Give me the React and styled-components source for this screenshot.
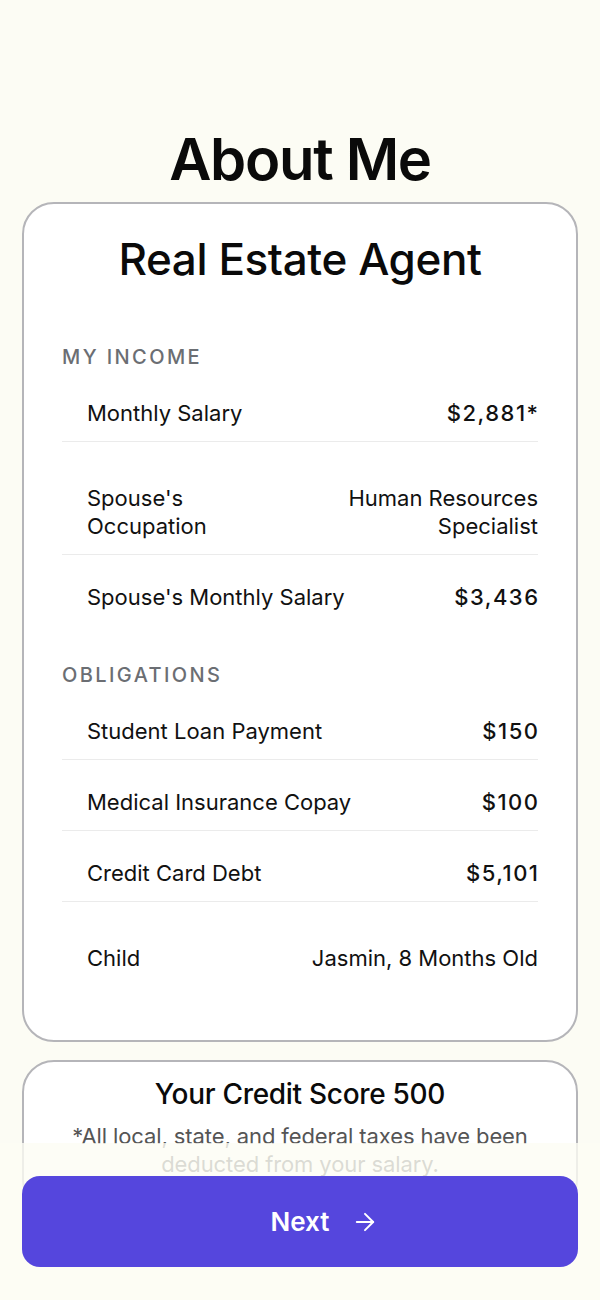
import React from "react";
import styled, { createGlobalStyle } from "styled-components";
import { ArrowRight } from "lucide-react";

const GlobalStyle = createGlobalStyle`
  * { box-sizing: border-box; }
  html, body { margin: 0; padding: 0; background: #fcfcf4; }
  body {
    font-family: Inter, "Noto Sans", "Liberation Sans", sans-serif;
    color: #111111;
    -webkit-font-smoothing: antialiased;
  }
`;

const Page = styled.main`
  display: flex;
  flex-direction: column;
  padding: 125px 22px 0;
`;

const Title = styled.h1`
  margin: 0 0 9px;
  text-align: center;
  font-size: 58px;
  line-height: 68px;
  font-weight: 600;
  letter-spacing: -1.3px;
  color: #0a0a0a;
`;

const Card = styled.section`
  background: #ffffff;
  border: 2px solid #b5b5b9;
  border-radius: 32px;
  padding: ${(p) => p.$pad};
  display: flex;
  flex-direction: column;
  & + & {
    margin-top: 18px;
  }
`;

const JobTitle = styled.h2`
  margin: 0 0 58px;
  text-align: center;
  font-size: 44px;
  line-height: 52px;
  font-weight: 500;
  letter-spacing: -0.4px;
  color: #0a0a0a;
`;

const Section = styled.div`
  display: flex;
  flex-direction: column;
  & + & {
    margin-top: 35px;
  }
`;

const SectionLabel = styled.h3`
  margin: 0;
  font-size: 20px;
  line-height: 28px;
  font-weight: 500;
  letter-spacing: 2.4px;
  text-transform: uppercase;
  color: #6b6e73;
`;

const Row = styled.div`
  display: flex;
  justify-content: space-between;
  align-items: flex-start;
  gap: 16px;
  padding: ${(p) => (p.$text ? "42px" : "28px")} 0 14px 25px;
  border-bottom: 1px solid ${(p) => (p.$last ? "transparent" : "#ebebeb")};
  font-size: 22px;
  line-height: 28px;
`;

const Label = styled.span`
  flex: 1 1 0;
  min-width: 0;
  font-weight: 400;
  color: #111111;
`;

const Value = styled.span`
  flex: 0 1 auto;
  max-width: 240px;
  text-align: right;
  font-weight: ${(p) => (p.$text ? 400 : 500)};
  letter-spacing: ${(p) => (p.$text ? "0" : "1.5px")};
  margin-right: ${(p) => (p.$text ? "0" : "-1.5px")};
  color: #111111;
`;

const ScoreTitle = styled.h2`
  margin: 0 0 11px;
  text-align: center;
  font-size: 28px;
  line-height: 34px;
  font-weight: 500;
  letter-spacing: -0.3px;
  color: #0a0a0a;
`;

const Note = styled.p`
  margin: 0;
  text-align: center;
  font-size: 22px;
  line-height: 28px;
  color: #555555;
  letter-spacing: -0.1px;
`;

const BottomBar = styled.div`
  position: fixed;
  left: 0;
  right: 0;
  bottom: 0;
  padding: 33px 22px 33px;
  background: rgba(252, 252, 244, 0.8);
`;

const NextButton = styled.button`
  width: 100%;
  height: 91px;
  border: none;
  border-radius: 18px;
  background: #5546dd;
  color: #ffffff;
  display: flex;
  align-items: center;
  justify-content: center;
  gap: 22px;
  font-family: inherit;
  font-size: 26px;
  font-weight: 600;
  cursor: pointer;
`;

const IconSlot = styled.span`
  display: flex;
  width: 28px;
  height: 28px;
  visibility: ${(p) => (p.$hidden ? "hidden" : "visible")};
`;

const income = [
  { label: "Monthly Salary", value: "$2,881*" },
  { label: "Spouse's Occupation", value: "Human Resources Specialist", text: true },
  { label: "Spouse's Monthly Salary", value: "$3,436" },
];

const obligations = [
  { label: "Student Loan Payment", value: "$150" },
  { label: "Medical Insurance Copay", value: "$100" },
  { label: "Credit Card Debt", value: "$5,101" },
  { label: "Child", value: "Jasmin, 8 Months Old", text: true },
];

function Rows({ items }) {
  return items.map((it, i) => (
    <Row key={it.label} $text={it.text} $last={i === items.length - 1}>
      <Label>{it.label}</Label>
      <Value $text={it.text}>{it.value}</Value>
    </Row>
  ));
}

export default function App() {
  return (
    <>
      <GlobalStyle />
      <Page>
        <Title>About Me</Title>
        <Card $pad="29px 38px 53px">
          <JobTitle>Real Estate Agent</JobTitle>
          <Section>
            <SectionLabel>My Income</SectionLabel>
            <Rows items={income} />
          </Section>
          <Section>
            <SectionLabel>Obligations</SectionLabel>
            <Rows items={obligations} />
          </Section>
        </Card>
        <Card $pad="15px 36px 32px">
          <ScoreTitle>Your Credit Score 500</ScoreTitle>
          <Note>*All local, state, and federal taxes have been deducted from your salary.</Note>
        </Card>
      </Page>
      <BottomBar>
        <NextButton type="button">
          <IconSlot $hidden aria-hidden="true" />
          <span>Next</span>
          <IconSlot>
            <ArrowRight size={28} strokeWidth={1.7} />
          </IconSlot>
        </NextButton>
      </BottomBar>
    </>
  );
}
